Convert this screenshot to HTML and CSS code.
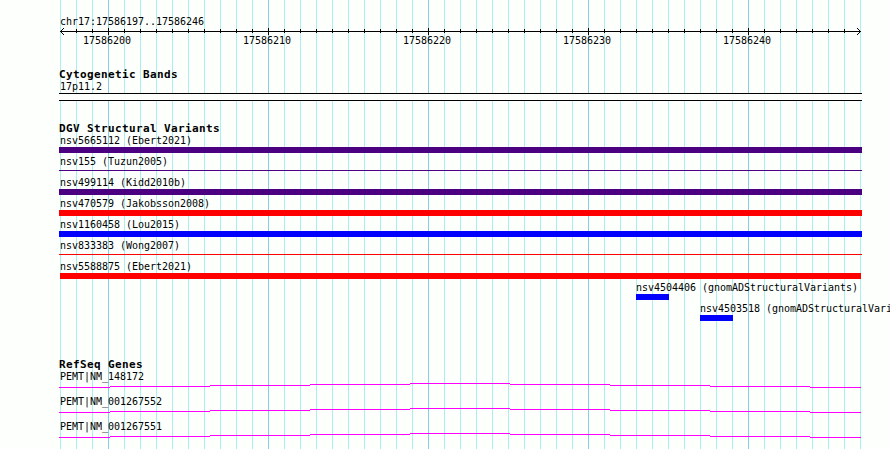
FILE: index.html
```
<!DOCTYPE html>
<html lang="en">
<head>
    <meta charset="UTF-8">
    <title>chr17:17586197..17586246</title>
    <link rel="stylesheet" href="styles.css">
</head>
<body>
    <div class="browser">
        <div class="ruler">
            <div class="label">chr17:17586197..17586246</div>
            <svg class="scale" width="803" height="7" shape-rendering="crispEdges">
                <rect x="1" y="3" width="801" height="1"/>
                <g id="ticks"></g>
                <path d="M1 3h1v1h-1zM2 2h1v1h-1zM3 1h1v1h-1zM4 0h1v1h-1zM2 4h1v1h-1zM3 5h1v1h-1zM4 6h1v1h-1z"/>
                <path d="M801 3h1v1h-1zM800 2h1v1h-1zM799 1h1v1h-1zM798 0h1v1h-1zM800 4h1v1h-1zM799 5h1v1h-1zM798 6h1v1h-1z"/>
            </svg>
            <div class="positions">
                <span>17586200</span>
                <span>17586210</span>
                <span>17586220</span>
                <span>17586230</span>
                <span>17586240</span>
            </div>
        </div>

        <div class="track bands">
            <h2>Cytogenetic Bands</h2>
            <div class="label">17p11.2</div>
            <div class="band"></div>
        </div>

        <div class="track variants">
            <h2>DGV Structural Variants</h2>
            <div class="variant"><div class="label">nsv5665112 (Ebert2021)</div><div class="bar purple"></div></div>
            <div class="variant"><div class="label">nsv155 (Tuzun2005)</div><div class="bar purple thin"></div></div>
            <div class="variant"><div class="label">nsv499114 (Kidd2010b)</div><div class="bar purple"></div></div>
            <div class="variant"><div class="label">nsv470579 (Jakobsson2008)</div><div class="bar red"></div></div>
            <div class="variant"><div class="label">nsv1160458 (Lou2015)</div><div class="bar blue"></div></div>
            <div class="variant"><div class="label">nsv833383 (Wong2007)</div><div class="bar red thin"></div></div>
            <div class="variant"><div class="label">nsv5588875 (Ebert2021)</div><div class="bar red inner"></div></div>
            <div class="variant first-short"><div class="label">nsv4504406 (gnomADStructuralVariants)</div><div class="bar blue short"></div></div>
            <div class="variant second-short"><div class="label">nsv4503518 (gnomADStructuralVariants)</div><div class="bar blue short"></div></div>
        </div>

        <div class="track genes">
            <h2>RefSeq Genes</h2>
            <div class="gene"><div class="label">PEMT|NM_148172</div><svg class="intron" width="802" height="5"><use href="#intron"/></svg></div>
            <div class="gene"><div class="label">PEMT|NM_001267552</div><svg class="intron" width="802" height="5"><use href="#intron"/></svg></div>
            <div class="gene"><div class="label">PEMT|NM_001267551</div><svg class="intron" width="802" height="5"><use href="#intron"/></svg></div>
        </div>
    </div>

    <svg class="defs" width="0" height="0">
        <defs>
            <path id="intron" d="M0 4.5H51M51 3.5H151M151 2.5H251M251 1.5H351M351 .5H451M451 1.5H551M551 2.5H651M651 3.5H751M751 4.5H802"/>
        </defs>
    </svg>

    <script>
        // one tick per base, longer every tenth base
        let ticks = '';
        for (let i = 1; i < 50; i++) {
            const major = i % 10 === 3;
            ticks += `<rect x="${1 + i * 16}" y="${major ? 0 : 1}" width="1" height="${major ? 7 : 4}"/>`;
        }
        document.getElementById('ticks').innerHTML = ticks;
    </script>
</body>
</html>
```
FILE: styles.css
```
body {
    margin: 0;
    background-color: #fdfffc;
    color: black;
    font-family: "DejaVu Sans Mono", monospace;
}

.browser {
    box-sizing: border-box;
    width: 890px;
    height: 449px;
    padding: 16px 0 0 59px;
    overflow: hidden;
    background-image:
        repeating-linear-gradient(to right, #87ceeb 0, #87ceeb 1px, transparent 1px, transparent 160px),
        repeating-linear-gradient(to right, #afeeee 0, #afeeee 1px, transparent 1px, transparent 16px);
    background-position: 108px 0, 60px 0;
    background-size: 753px 449px, 801px 449px;
    background-repeat: no-repeat;
}

.label {
    height: 12px;
    padding-left: 1px;
    font-size: 10px;
    line-height: 12px;
    letter-spacing: -0.02px;
    white-space: pre;
}

.scale {
    display: block;
}

.positions {
    display: flex;
    padding-left: 24px;
    font-size: 10px;
    line-height: 12px;
    letter-spacing: -0.02px;
}

.positions span {
    width: 160px;
}

.track h2 {
    height: 13px;
    margin: 0;
    font-size: 11px;
    line-height: 13px;
    letter-spacing: 0.378px;
}

.bands {
    margin-top: 21px;
}

.band {
    box-sizing: border-box;
    width: 803px;
    height: 8px;
    border-top: 1px solid black;
    border-bottom: 1px solid black;
    background-color: #fdfffc;
}

.variants {
    margin-top: 21px;
}

.variant {
    height: 21px;
}

.bar {
    width: 803px;
    height: 6px;
}

.purple {
    background-color: #4b0082;
}

.red {
    background-color: #ff0000;
}

.blue {
    background-color: #0000ff;
}

.thin {
    height: 1px;
    margin-top: 2px;
}

.inner {
    width: 801px;
    margin-left: 1px;
}

.short {
    width: 33px;
    margin-left: 1px;
}

.first-short {
    padding-left: 576px;
}

.second-short {
    padding-left: 640px;
}

.genes {
    margin-top: 34px;
}

.gene {
    height: 25px;
}

.intron {
    display: block;
    stroke: #ff00ff;
    stroke-width: 1px;
    shape-rendering: crispEdges;
}

.defs {
    position: absolute;
}
```
